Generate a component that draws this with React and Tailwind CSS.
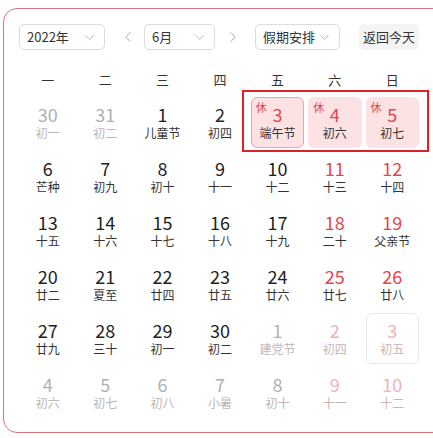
import React from 'react';
import { ChevronDown, ChevronLeft, ChevronRight } from 'lucide-react';

const WEEK = ['一', '二', '三', '四', '五', '六', '日'];

// kind: 'out' = other month, 'hol' = holiday rest day
const DAYS = [
  [30, '初一', 'out'], [31, '初二', 'out'], [1, '儿童节'], [2, '初四'], [3, '端午节', 'hol', true], [4, '初六', 'hol'], [5, '初七', 'hol'],
  [6, '芒种'], [7, '初九'], [8, '初十'], [9, '十一'], [10, '十二'], [11, '十三'], [12, '十四'],
  [13, '十五'], [14, '十六'], [15, '十七'], [16, '十八'], [17, '十九'], [18, '二十'], [19, '父亲节'],
  [20, '廿二'], [21, '夏至'], [22, '廿四'], [23, '廿五'], [24, '廿六'], [25, '廿七'], [26, '廿八'],
  [27, '廿九'], [28, '三十'], [29, '初一'], [30, '初二'], [1, '建党节', 'out'], [2, '初四', 'out'], [3, '初五', 'out', true],
  [4, '初六', 'out'], [5, '初七', 'out'], [6, '初八', 'out'], [7, '小暑', 'out'], [8, '初十', 'out'], [9, '十一', 'out'], [10, '十二', 'out'],
];

function Select({ label, width }) {
  return (
    <div className={`${width} h-[26px] flex items-center justify-between border border-[#dcdcdc] rounded-[5px] pl-[7px] pr-[7px] text-[13px] text-[#333]`}>
      <span>{label}</span>
      <ChevronDown className="w-[15px] h-[15px] text-[#aaa]" strokeWidth={1.4} />
    </div>
  );
}

function DayCell({ day, lunar, kind, boxed, col }) {
  const weekend = col >= 5;
  const out = kind === 'out';
  const hol = kind === 'hol';
  let numColor = 'text-[#1f1f1f]';
  let lunarColor = 'text-[#333]';
  if (out) {
    numColor = weekend ? 'text-[#ecb4b7]' : 'text-[#b0b0b0]';
    lunarColor = weekend ? 'text-[#c9b4b5]' : 'text-[#b8b8b8]';
  } else if (weekend || hol) {
    numColor = 'text-[#e0474d]';
  }
  let box = 'border border-transparent';
  if (hol) box = boxed ? 'bg-[#fde2e4] border border-[#e5a4a9]' : 'bg-[#fde2e4] border border-transparent';
  else if (boxed) box = 'border border-[#e8e8e8]';

  return (
    <div className="h-[54px] px-[2px] py-[1.5px]">
      <div className={`relative h-full rounded-[6px] flex flex-col items-center justify-center ${box}`}>
        {hol && <span className="absolute left-[4px] top-[3px] text-[11px] leading-[12px] text-[#e0474d]">休</span>}
        <span className={`text-[18px] leading-[19px] ${numColor}`}>{day}</span>
        <span className={`mt-[2px] text-[12px] leading-[14px] ${lunarColor}`}>{lunar}</span>
      </div>
    </div>
  );
}

export default function App() {
  return (
    <div className="w-[433px] h-[438px] overflow-hidden bg-white" style={{ fontFamily: '"Noto Sans CJK SC", "Noto Sans", sans-serif' }}>
      <div className="ml-[3px] mt-[8px] w-[460px] h-[425px] border border-[#d7737c] rounded-[14px] pl-[15px] pt-[15px]">
        <div className="flex items-center h-[26px]">
          <Select label="2022年" width="w-[86px]" />
          <ChevronLeft className="w-[18px] h-[18px] ml-[14px] text-[#aaa]" strokeWidth={1.3} />
          <div className="ml-[7px]">
            <Select label="6月" width="w-[71px]" />
          </div>
          <ChevronRight className="w-[18px] h-[18px] ml-[9px] text-[#aaa]" strokeWidth={1.3} />
          <div className="ml-[13px]">
            <Select label="假期安排" width="w-[85px]" />
          </div>
          <button className="ml-[19px] w-[60px] h-[26px] rounded-[5px] bg-[#f4f4f4] text-[13px] text-[#333]">返回今天</button>
        </div>

        <div className="relative w-[402px] mt-[15px]">
          <div className="grid grid-cols-7 h-[30px] items-center">
            {WEEK.map(w => (
              <div key={w} className="text-center text-[13px] text-[#333]">{w}</div>
            ))}
          </div>
          <div className="relative grid grid-cols-7">
            {DAYS.map(([day, lunar, kind, boxed], i) => (
              <DayCell key={i} day={day} lunar={lunar} kind={kind} boxed={boxed} col={i % 7} />
            ))}
            <div className="absolute left-[223px] top-[-5px] w-[187px] h-[62px] border-2 border-[#d8232a]" />
          </div>
        </div>
      </div>
    </div>
  );
}
